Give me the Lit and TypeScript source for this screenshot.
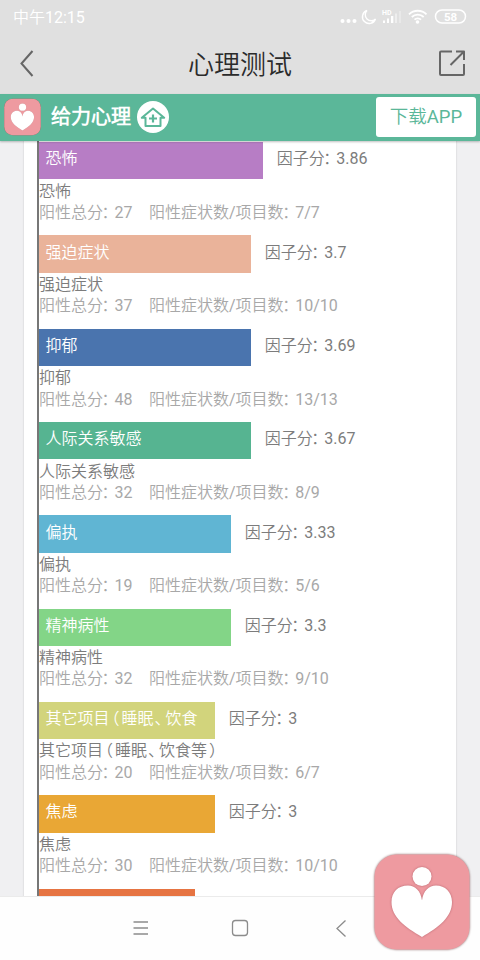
import { LitElement, html, css, svg } from "lit";
import { customElement, property } from "lit/decorators.js";

interface Factor {
  name: string;
  short?: string;
  score: string;
  total: string;
  ratio: string;
  color: string;
  width: number;
}

const FACTORS: Factor[] = [
  { name: "恐怖", score: "3.86", total: "27", ratio: "7/7", color: "#b77dc5", width: 224.3 },
  { name: "强迫症状", score: "3.7", total: "37", ratio: "10/10", color: "#eab39a", width: 212.3 },
  { name: "抑郁", score: "3.69", total: "48", ratio: "13/13", color: "#4a74ae", width: 212.3 },
  { name: "人际关系敏感", score: "3.67", total: "32", ratio: "8/9", color: "#56b491", width: 212.3 },
  { name: "偏执", score: "3.33", total: "19", ratio: "5/6", color: "#60b5d3", width: 192.3 },
  { name: "精神病性", score: "3.3", total: "32", ratio: "9/10", color: "#83d587", width: 192.3 },
  {
    name: "其它项目（睡眠、饮食等）",
    short: "其它项目（睡眠、饮食",
    score: "3",
    total: "20",
    ratio: "6/7",
    color: "#d2d47c",
    width: 176.3,
  },
  { name: "焦虑", score: "3", total: "30", ratio: "10/10", color: "#e9a735", width: 176.3 },
];

const PUNCTUATION: Record<string, string> = {
  "：": "colon",
  "（": "open",
  "）": "close",
  "、": "comma",
};

/** Sets full-width punctuation tighter than one em. */
const typeset = (text: string) =>
  text
    .split(/([：（）、])/)
    .map((part) => (PUNCTUATION[part] ? html`<span class=${PUNCTUATION[part]}>${part}</span>` : part));

@customElement("heart-logo")
class HeartLogo extends LitElement {
  static styles = css`
    :host {
      display: block;
    }
    svg {
      display: block;
      width: 100%;
      height: 100%;
      overflow: visible;
    }
    .tile {
      fill: #ee9aa0;
      filter: drop-shadow(0 0 0.8px rgba(90, 40, 40, 0.7));
    }
    .mark {
      fill: #fff;
      filter: drop-shadow(0.5px 0.5px 1px rgba(130, 50, 60, 0.5));
    }
  `;
  render() {
    return html`<svg viewBox="0 0 96 96">
      <rect class="tile" x="0.5" y="0.5" width="95" height="95" rx="22" />
      <g class="mark">
        <circle cx="48" cy="22.5" r="9.5" />
        <path
          d="M48 46.500C47 37 41 31.500 34 31.500C24 31.500 17.500 38 17.500 48C17.500 63 31 73 48 83C65 73 78 63 78 48C78 38 71 31.500 62 31.500C55 31.500 49 37 48 46.500Z"
        />
      </g>
    </svg>`;
  }
}

@customElement("factor-row")
class FactorRow extends LitElement {
  @property({ attribute: false }) factor!: Factor;

  static styles = css`
    :host {
      display: block;
      height: 93.33px;
      font-size: 16px;
      line-height: 21.33px;
      white-space: nowrap;
    }
    .top {
      display: flex;
      height: 37.33px;
      margin-bottom: 1.2px;
    }
    .bar {
      box-sizing: border-box;
      padding: 6.2px 0 0 6.5px;
      color: #fff;
    }
    .score {
      padding: 6.2px 0 0 13.5px;
      color: #7c7c7c;
    }
    .name {
      color: #7c7c7c;
    }
    .detail {
      display: flex;
      gap: 16.5px;
      color: #a8a8a8;
    }
    .colon {
      margin: 0 -3px 0 -1.5px;
    }
    .open {
      margin: 0 2px 0 -6px;
    }
    .comma {
      margin: 0 -5px 0 1px;
    }
    .close {
      margin-left: 2px;
    }
  `;
  render() {
    const f = this.factor;
    return html`
      <div class="top">
        <div class="bar" style="width:${f.width}px;background:${f.color}">${typeset(f.short ?? f.name)}</div>
        <div class="score">${typeset("因子分：" + f.score)}</div>
      </div>
      <div class="name">${typeset(f.name)}</div>
      <div class="detail">
        <span>${typeset("阳性总分：" + f.total)}</span><span>${typeset("阳性症状数/项目数：" + f.ratio)}</span>
      </div>
    `;
  }
}

@customElement("app-root")
class AppRoot extends LitElement {
  static styles = css`
    :host {
      position: relative;
      display: flex;
      flex-direction: column;
      width: 480px;
      height: 960px;
      overflow: hidden;
      background: #fefefe;
      font-family: Roboto, "Noto Sans CJK SC DemiLight", "Noto Sans CJK SC", sans-serif;
      font-weight: 400;
    }
    svg {
      display: block;
      fill: none;
    }
    .status {
      display: flex;
      justify-content: space-between;
      height: 35px;
      background: #e0e0e0;
      color: #fff;
      font-size: 16px;
      line-height: 36px;
    }
    .time {
      padding-left: 13px;
    }
    .status text {
      fill: #fff;
      font-weight: 700;
    }
    .title {
      display: grid;
      grid-template-columns: 60px 1fr 60px;
      height: 58.500px;
      background: #e0e0e0;
      color: #2b2b2b;
      font-size: 26px;
      line-height: 61px;
      text-align: center;
    }
    .promo {
      position: relative;
      box-sizing: border-box;
      display: flex;
      align-items: center;
      height: 47.5px;
      padding: 0 4px 1px;
      background: #5bb799;
      box-shadow: 0 1px 2px rgba(0, 0, 0, 0.25);
      color: #fff;
    }
    .small {
      width: 37px;
      height: 38px;
    }
    .brand {
      margin: 0 6px 0 10px;
      font-size: 20px;
      font-weight: 700;
      line-height: 46px;
    }
    .download {
      width: 100px;
      height: 40px;
      margin-left: auto;
      border-radius: 3px;
      background: #fff;
      color: #5bb799;
      font-size: 18.5px;
      line-height: 41px;
      text-align: center;
    }
    .page {
      flex: none;
      box-sizing: border-box;
      height: 755.5px;
      padding: 0 24px;
      overflow: hidden;
      background: #f0f0f2;
      border-bottom: 1px solid #ebebeb;
    }
    .card {
      height: 100%;
      padding-left: 13px;
      background: #fff;
      box-shadow: 0 0 1px 1px rgba(0, 0, 0, 0.05);
      overflow: hidden;
    }
    .chart {
      border-left: 2px solid #777;
      padding-top: 1px;
    }
    .last {
      width: 155.8px;
      height: 37.33px;
      background: #e67442;
    }
    .nav {
      flex: 1;
      display: flex;
    }
    .floating {
      position: absolute;
      left: 374px;
      top: 854px;
      width: 96px;
      height: 96px;
    }
  `;

  statusIcons() {
    return svg`<svg width="150" height="35" stroke="#fff">
      <g fill="#fff" stroke="none">
        <circle cx="12.500" cy="21" r="2" /><circle cx="18.500" cy="21" r="2" /><circle cx="24.500" cy="21" r="2" />
        <text x="52" y="14.500" font-size="7">HD</text>
        <rect x="53" y="20.500" width="2" height="2.500" /><rect x="57" y="18.500" width="2" height="4.500" />
        <rect x="61" y="16" width="2.300" height="7" />
        <rect x="65" y="13.500" width="2" height="9.500" opacity="0.45" /><rect x="69" y="11" width="2" height="12" opacity="0.3" />
        <circle cx="87.500" cy="22" r="1.800" />
        <text x="120.500" y="20.800" font-size="11.500" text-anchor="middle">58</text>
      </g>
      <path d="M37 10.500A6.700 6.700 0 1 0 45.500 19A6 6 0 0 1 37 10.500Z" stroke-width="1.400" />
      <path d="M79 14.300A12.500 12.500 0 0 1 96.500 14.300M81.800 17A8.500 8.500 0 0 1 93.700 17M84.500 19.700A4.500 4.500 0 0 1 91 19.700" stroke-width="1.800" />
      <rect x="105.500" y="10" width="30" height="13" rx="6.500" stroke-width="1.500" />
    </svg>`;
  }

  render() {
    return html`
      <div class="status"><span class="time">中午12:15</span>${this.statusIcons()}</div>
      <div class="title">
        <svg width="60" height="58" stroke="#666" stroke-width="2"><path d="M32.500 16L21.500 28.500L32.500 41" /></svg>
        <span>心理测试</span>
        <svg width="60" height="58" stroke="#666" stroke-width="2" stroke-linejoin="round">
          <path d="M32 16.500H21Q20 16.500 20 17.500V39Q20 40 21 40H43Q44 40 44 39V29M36 16.500H44V25M43.500 17L30.500 30" />
        </svg>
      </div>
      <div class="promo">
        <heart-logo class="small"></heart-logo>
        <span class="brand">给力心理</span>
        <svg width="32" height="32" viewBox="0 0 32 32">
          <circle cx="16" cy="16" r="16" fill="#fff" />
          <path
            d="M16 7.500L4.800 16.800H8.500V25H23.500V16.800H27.200Z"
            stroke="#5bb799"
            stroke-width="2"
            stroke-linejoin="round"
          />
          <path d="M16 13.500V21.500M12 17.500H20" stroke="#5bb799" stroke-width="2.200" />
        </svg>
        <div class="download">下载APP</div>
      </div>
      <div class="page">
        <div class="card">
          <div class="chart">
            ${FACTORS.map((f) => html`<factor-row .factor=${f}></factor-row>`)}
            <div class="last"></div>
          </div>
        </div>
      </div>
      <div class="nav">
        <svg width="480" height="62" stroke="#8c8c8c" stroke-width="1.300">
          <path d="M133.500 25H148M133.500 31H148M133.500 37H148" />
          <rect x="232.500" y="23.500" width="15" height="15" rx="3" />
          <path d="M345.500 23.500L337 31.500L345.500 39.500" />
        </svg>
      </div>
      <heart-logo class="floating"></heart-logo>
    `;
  }
}
